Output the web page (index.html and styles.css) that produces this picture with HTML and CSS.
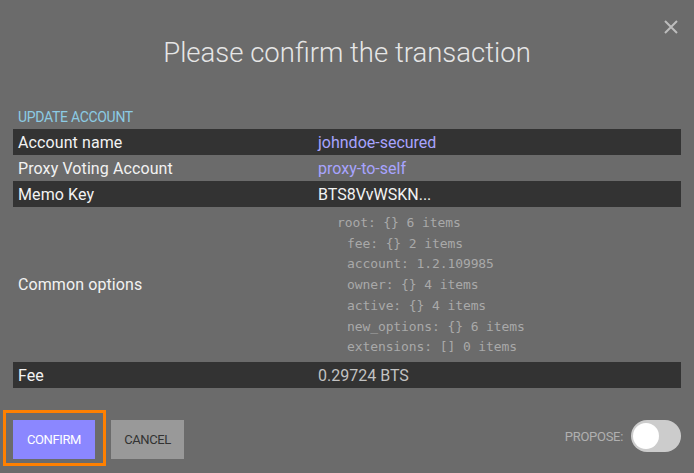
FILE: index.html
```html
<!DOCTYPE html>
<html>
<head>
<meta charset="utf-8">
<link rel="stylesheet" href="styles.css">
</head>
<body>
<div class="modal">
  <span class="close"><svg width="14" height="14" viewBox="0 0 14 14"><path d="M1 1L13 13M13 1L1 13" stroke="#bdbdbd" stroke-width="2" fill="none"/></svg></span>
  <h1 class="title">Please confirm the transaction</h1>
  <div class="op-title">UPDATE ACCOUNT</div>
  <div class="table">
    <div class="row dark"><span class="label">Account name</span><span class="value link">johndoe-secured</span></div>
    <div class="row"><span class="label">Proxy Voting Account</span><span class="value link">proxy-to-self</span></div>
    <div class="row dark"><span class="label">Memo Key</span><span class="value">BTS8VvWSKN...</span></div>
    <div class="row tall"><span class="label">Common options</span>
      <div class="value json">
        <div class="jl">root: {} 6 items</div>
        <div class="jl ind">fee: {} 2 items</div>
        <div class="jl ind">account: 1.2.109985</div>
        <div class="jl ind">owner: {} 4 items</div>
        <div class="jl ind">active: {} 4 items</div>
        <div class="jl ind">new_options: {} 6 items</div>
        <div class="jl ind">extensions: [] 0 items</div>
      </div>
    </div>
    <div class="row dark"><span class="label">Fee</span><span class="value fee">0.29724 BTS</span></div>
  </div>
  <div class="footer">
    <div class="actions">
      <div class="focus"><button class="btn confirm">CONFIRM</button></div>
      <button class="btn cancel">CANCEL</button>
    </div>
    <div class="propose">
      <span class="plabel">PROPOSE:</span>
      <span class="toggle"><span class="knob"></span></span>
    </div>
  </div>
</div>
</body>
</html>
```
FILE: styles.css
```css
html, body { margin: 0; padding: 0; }
body {
  background: #6b6b6b;
  width: 694px;
  height: 473px;
  overflow: hidden;
  font-family: Roboto, "Liberation Sans", sans-serif;
}
.modal { position: relative; padding: 0 13px 0 13px; }
.close {
  position: absolute;
  right: 16px;
  top: 20px;
  display: block;
  line-height: 0;
}
.title {
  margin: 0;
  padding-top: 36px;
  height: 70px;
  box-sizing: border-box;
  text-align: center;
  font-weight: 300;
  font-size: 27.5px;
  line-height: 34px;
  color: #e6e6e6;
}
.op-title {
  margin-top: 36px;
  padding-left: 5px;
  color: #8ccbe4;
  font-size: 14px;
  line-height: 23px;
  letter-spacing: -0.3px;
}
.table { width: 668px; }
.row {
  display: flex;
  align-items: center;
  height: 26px;
  color: #f2f2f2;
  font-size: 16px;
}
.row.dark { background: #333333; }
.row.tall { height: 155px; }
.label { width: 300px; padding-left: 5px; letter-spacing: 0.1px; }
.value { color: #f2f2f2; }
.value.link { color: #a8a4ff; }
.value.fee { color: #c2c2c2; }
.json {
  align-self: flex-start;
  padding-top: 6px;
  padding-left: 19px;
  font-family: "DejaVu Sans Mono", monospace;
  font-size: 13px;
  color: #a9a9a9;
  letter-spacing: -0.1px;
}
.jl { line-height: 20.7px; white-space: pre; }
.jl.ind { padding-left: 10px; }
.footer {
  display: flex;
  justify-content: space-between;
  align-items: flex-start;
  margin-top: 22px;
  margin-left: -10px;
}
.actions { display: flex; align-items: flex-start; gap: 5px; }
.focus {
  border: 3px solid #ff8000;
  padding: 7px 8px 4px 7px;
}
.btn {
  border: 0;
  margin: 0;
  height: 39px;
  font-family: Roboto, "Liberation Sans", sans-serif;
  font-size: 13px;
  letter-spacing: -0.4px;
  display: block;
}
.confirm { width: 82px; background: #8b87ff; color: #ffffff; }
.cancel { width: 73px; background: #999999; color: #333333; margin-top: 10px; }
.propose {
  display: flex;
  align-items: center;
  gap: 8px;
  margin-top: 10px;
}
.plabel { color: #b0b0b0; font-size: 13px; letter-spacing: -0.3px; }
.toggle {
  position: relative;
  display: block;
  width: 50px;
  height: 32px;
  border-radius: 16px;
  background: #cccccc;
}
.knob {
  position: absolute;
  left: 2px;
  top: 3px;
  width: 26px;
  height: 26px;
  border-radius: 50%;
  background: #ffffff;
}
```
